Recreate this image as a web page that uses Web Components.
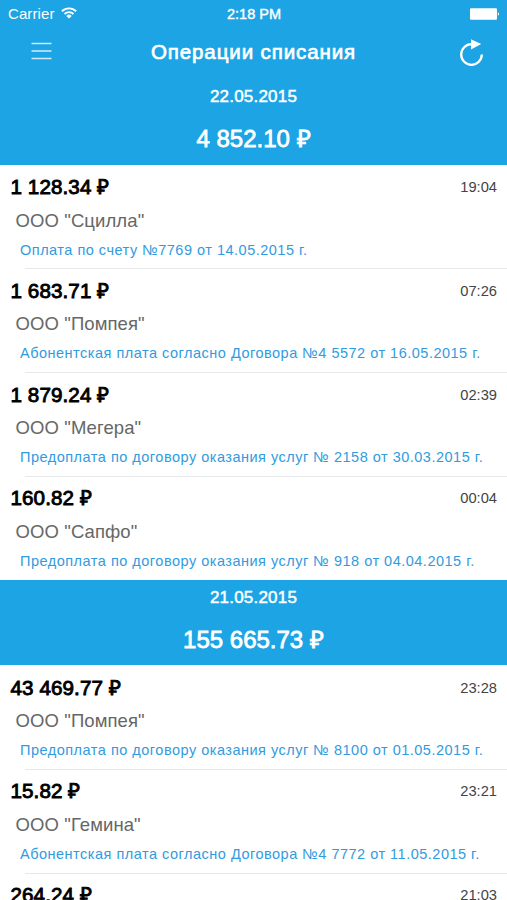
<!DOCTYPE html>
<html lang="ru">
<head>
<meta charset="utf-8">
<title>Операции списания</title>
<style>
  html, body {
    margin: 0;
    height: 900px;
    overflow: hidden;
    background: #fff;
    font-family: "Liberation Sans", Arial, sans-serif;
  }
</style>
</head>
<body>
<app-screen>
  <status-bar slot="top" carrier="Carrier" time="2:18 PM"></status-bar>
  <nav-bar slot="top">Операции списания</nav-bar>

  <day-section date="22.05.2015" total="4 852.10 ₽">
    <operation-row amount="1 128.34 ₽" time="19:04" company='ООО "Сцилла"'>Оплата по счету №7769 от 14.05.2015 г.</operation-row>
    <operation-row amount="1 683.71 ₽" time="07:26" company='ООО "Помпея"'>Абонентская плата согласно Договора №4 5572 от 16.05.2015 г.</operation-row>
    <operation-row amount="1 879.24 ₽" time="02:39" company='ООО "Мегера"'>Предоплата по договору оказания услуг № 2158 от 30.03.2015 г.</operation-row>
    <operation-row amount="160.82 ₽" time="00:04" company='ООО "Сапфо"' last>Предоплата по договору оказания услуг № 918 от 04.04.2015 г.</operation-row>
  </day-section>

  <day-section date="21.05.2015" total="155 665.73 ₽">
    <operation-row amount="43 469.77 ₽" time="23:28" company='ООО "Помпея"'>Предоплата по договору оказания услуг № 8100 от 01.05.2015 г.</operation-row>
    <operation-row amount="15.82 ₽" time="23:21" company='ООО "Гемина"'>Абонентская плата согласно Договора №4 7772 от 11.05.2015 г.</operation-row>
    <operation-row amount="264.24 ₽" time="21:03"></operation-row>
  </day-section>
</app-screen>

<script>
class AppScreen extends HTMLElement {
  constructor() {
    super();
    this.attachShadow({ mode: 'open' }).innerHTML = `
      <style>
        :host {
          display: flex;
          flex-direction: column;
          width: 507px;
          height: 900px;
          overflow: hidden;
          background: #fff;
        }
        header { flex: none; background: #1ca4e4; color: #fff; }
        main { flex: 1; min-height: 0; overflow: hidden; }
      </style>
      <header><slot name="top"></slot></header>
      <main><slot></slot></main>
    `;
  }
}

class StatusBar extends HTMLElement {
  constructor() {
    super();
    this.attachShadow({ mode: 'open' });
  }

  connectedCallback() {
    this.shadowRoot.innerHTML = `
      <style>
        :host {
          display: grid;
          grid-template-columns: 1fr auto 1fr;
          align-items: center;
          height: 28px;
          padding: 0 7px 0 8px;
          font-size: 15px;
          line-height: 28px;
        }
        .left { display: flex; align-items: center; gap: 6px; letter-spacing: 0.1px; }
        .time { font-size: 14.5px; -webkit-text-stroke: 0.4px; }
        .battery { justify-self: end; }
        svg { display: block; fill: #fff; }
        .left svg { margin-top: -2px; }
      </style>
      <div class="left">
        <span>${this.getAttribute('carrier')}</span>
        <svg width="16" height="12" viewBox="0 0 16 12">
          <g fill="none" stroke="#fff" stroke-width="1.9">
            <path d="M0.9 4.3 A10.2 10.2 0 0 1 15.1 4.3"/>
            <path d="M3.5 7 A6.4 6.4 0 0 1 12.5 7"/>
          </g>
          <path d="M8 11.6 L5.3 8.9 A3.8 3.8 0 0 1 10.7 8.9 Z"/>
        </svg>
      </div>
      <div class="time">${this.getAttribute('time')}</div>
      <svg class="battery" width="30" height="12" viewBox="0 0 30 12">
        <rect x="0" y="0.3" width="27" height="11.4" rx="1"/>
        <path d="M27.9 4.2 A2 2 0 0 1 27.9 7.8 Z"/>
      </svg>
    `;
  }
}

class NavBar extends HTMLElement {
  constructor() {
    super();
    this.attachShadow({ mode: 'open' }).innerHTML = `
      <style>
        :host {
          display: grid;
          grid-template-columns: 1fr auto 1fr;
          align-items: center;
          height: 51px;
        }
        h1 {
          margin: 0;
          font-size: 20.5px;
          font-weight: 400;
          line-height: 48px;
          height: 51px;
          letter-spacing: 0.9px;
          -webkit-text-stroke: 0.7px;
        }
        svg { display: block; fill: none; stroke: #fff; }
        .menu { margin: -6px 0 0 31px; }
        .reload { justify-self: end; margin: -2px 22px 0 0; }
      </style>
      <svg class="menu" width="21" height="18" viewBox="0 0 21 18" stroke-width="1.5" opacity="0.8">
        <path d="M0.5 1.5 H20.5 M0.5 9 H20.5 M0.5 16.5 H20.5"/>
      </svg>
      <h1><slot></slot></h1>
      <svg class="reload" width="26" height="28" viewBox="0 0 26 28" stroke-width="2.3">
        <path d="M12.5 5.2 A10.3 10.3 0 1 0 22.8 15.5"/>
        <path d="M12 0.2 L22.2 5 L12 10.4 Z" fill="#fff" stroke="none"/>
      </svg>
    `;
  }
}

class DaySection extends HTMLElement {
  constructor() {
    super();
    this.attachShadow({ mode: 'open' });
  }

  connectedCallback() {
    this.shadowRoot.innerHTML = `
      <style>
        :host { display: block; }
        .head {
          box-sizing: border-box;
          height: 85.5px;
          padding-top: 7px;
          background: #1ca4e4;
          color: #fff;
          text-align: center;
        }
        .date {
          font-size: 17px;
          line-height: 21px;
          letter-spacing: 0.2px;
          -webkit-text-stroke: 0.5px;
        }
        .total {
          margin-top: 17px;
          font-size: 24px;
          line-height: 30px;
          -webkit-text-stroke: 0.8px;
        }
      </style>
      <div class="head">
        <div class="date">${this.getAttribute('date')}</div>
        <div class="total">${this.getAttribute('total')}</div>
      </div>
      <slot></slot>
    `;
  }
}

class OperationRow extends HTMLElement {
  constructor() {
    super();
    this.attachShadow({ mode: 'open' });
  }

  connectedCallback() {
    this.shadowRoot.innerHTML = `
      <style>
        :host {
          display: flex;
          flex-direction: column;
          box-sizing: border-box;
          height: 103.8px;
          padding-top: 10.5px;
        }
        .top {
          display: flex;
          justify-content: space-between;
          height: 26px;
          padding: 0 10px 0 10.5px;
        }
        .amount {
          font-size: 20.6px;
          line-height: 24px;
          letter-spacing: 0.1px;
          color: #000;
          -webkit-text-stroke: 0.9px;
        }
        .time { font-size: 14.7px; line-height: 25px; color: #444; }
        .company {
          padding-left: 15.5px;
          margin-top: 7.5px;
          font-size: 18.5px;
          line-height: 24px;
          letter-spacing: 0.1px;
          color: #666;
        }
        .purpose {
          padding-left: 20px;
          margin-top: 8px;
          font-size: 14.5px;
          line-height: 18px;
          letter-spacing: 0.5px;
          color: #319be0;
          white-space: nowrap;
        }
        .line { height: 1px; margin: auto 0 -0.8px 25px; background: #e6e8ea; }
        :host([last]) .line { display: none; }
      </style>
      <div class="top">
        <span class="amount">${this.getAttribute('amount')}</span>
        <span class="time">${this.getAttribute('time')}</span>
      </div>
      <div class="company">${this.getAttribute('company') || ''}</div>
      <div class="purpose"><slot></slot></div>
      <div class="line"></div>
    `;
  }
}

customElements.define('app-screen', AppScreen);
customElements.define('status-bar', StatusBar);
customElements.define('nav-bar', NavBar);
customElements.define('day-section', DaySection);
customElements.define('operation-row', OperationRow);
</script>
</body>
</html>
